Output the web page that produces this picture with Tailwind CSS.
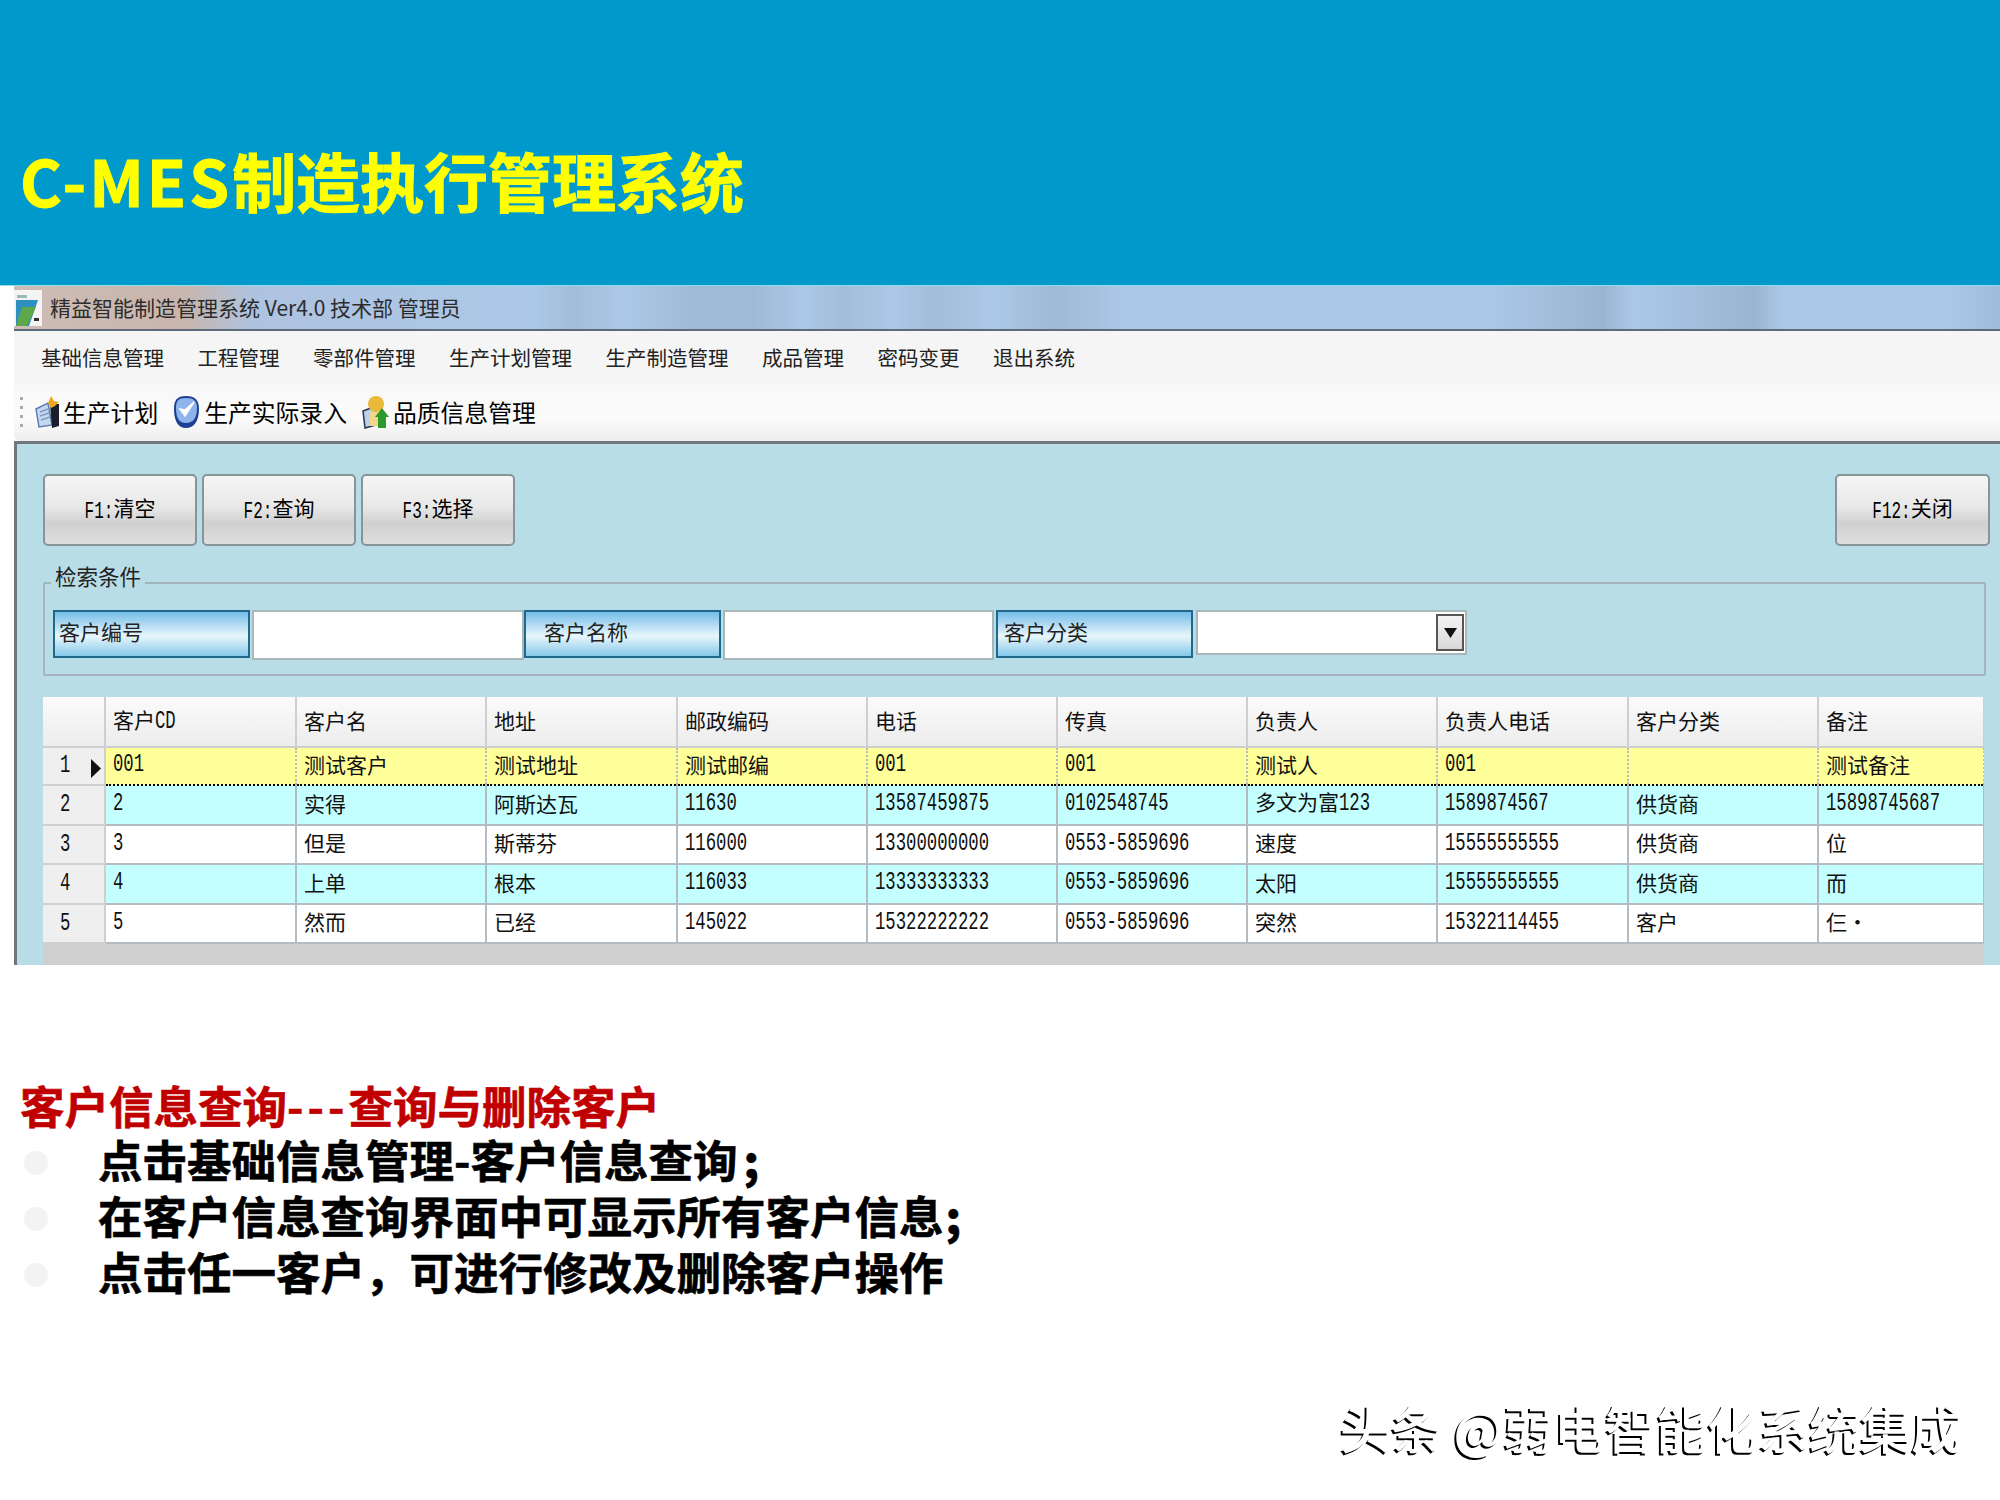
<!DOCTYPE html>
<html lang="zh-CN">
<head>
    <meta charset="UTF-8">
    <title>C-MES制造执行管理系统</title>
    <script src="https://cdn.jsdelivr.net/npm/@tailwindcss/browser@4"></script>
</head>
<body class="w-[2000px] h-[1500px] overflow-hidden bg-white font-['Noto_Sans_CJK_SC',sans-serif] text-black">

<!-- slide title -->
<header class="h-[286px] bg-[#0099cc] border-b border-[#8fdfe8] pt-[147px] pl-[20px]">
    <h1 class="text-[64px] leading-none font-bold text-[#ffff00] [-webkit-text-stroke:1px_#ffff00]"><span class="tracking-[3px]">C-MES</span>制造执行管理系统</h1>
</header>

<!-- application window -->
<section class="ml-[14px] h-[679px] flex flex-col">
    <div class="h-[45px] shrink-0 flex items-center border-b-2 border-[#5d6b7c] bg-[linear-gradient(90deg,#cdbdb6_0,#c8b6ad_170px,#aec3e0_240px,#acc8e8_520px,#a3bcd9_560px,#acc8e8_610px,#a0b9d6_680px,#a0b9d6_740px,#acc8e8_790px,#a3bcd9_830px,#acc8e8_880px,#a3bcd9_920px,#acc8e8_980px,#a0b9d6_1040px,#acc8e8_1110px,#acc8e8_1470px,#9ab5d3_1590px,#acc8e8_1620px,#9ab5d3_1740px,#acc8e8_1770px,#acc8e8_1930px,#9fbcdc_1986px)]">
        <svg class="w-[28px] h-[36px] shrink-0" viewBox="0 0 28 36">
            <rect width="28" height="36" fill="#f4f4f4"/>
            <rect x="3" y="5" width="10" height="3" fill="#9bb"/>
            <path d="M2 10H24L15 36H2Z" fill="#2f8fc0"/>
            <path d="M8 17H22L13 36H2Z" fill="#5fa84a"/>
            <rect x="20" y="28" width="5" height="3" fill="#333"/>
        </svg>
        <span class="ml-[8px] text-[21px] leading-none text-[#2c2c2c]">精益智能制造管理系统 Ver4.0 技术部 管理员</span>
    </div>
    <nav class="h-[52px] shrink-0 flex items-center gap-[33.5px] pl-[27px] bg-[#f5f5f5] text-[20.5px] leading-none text-[#222]">
        <span>基础信息管理</span>
        <span>工程管理</span>
        <span>零部件管理</span>
        <span>生产计划管理</span>
        <span>生产制造管理</span>
        <span>成品管理</span>
        <span>密码变更</span>
        <span>退出系统</span>
    </nav>
    <div class="h-[58px] shrink-0 flex items-center pl-[6px] text-[23.8px] leading-none bg-[linear-gradient(180deg,#f8f8f8_0,#fbfbfb_60%,#eeeeee_100%)] rounded-bl-[6px]">
        <div class="w-[3px] h-[30px] flex flex-col justify-between">
            <i class="block h-[3px] bg-[#aaa]"></i><i class="block h-[3px] bg-[#aaa]"></i><i class="block h-[3px] bg-[#aaa]"></i><i class="block h-[3px] bg-[#aaa]"></i>
        </div>
        <svg class="ml-[11px] w-[26px] h-[34px] shrink-0" viewBox="0 0 26 34">
            <path d="M2 14L14 8L18 30L5 32Z" fill="#c6d8ef" stroke="#5a7fae" stroke-width="1.5"/>
            <path d="M16 9H25V31L18 33Z" fill="#1a1f2c"/>
            <path d="M6 17L14 14M6 21L15 18M7 25L16 22" stroke="#7f9cc4" stroke-width="1.5"/>
            <path d="M17 1L20 6L25 7L21 11L17 13L14 8Z" fill="#f0a820"/>
        </svg>
        <span class="ml-[3px]">生产计划</span>
        <svg class="ml-[15px] w-[27px] h-[34px] shrink-0" viewBox="0 0 27 34">
            <path d="M13 1C22 1 26 5 26 14C26 26 21 33 13 33C5 33 1 26 1 14C1 5 4 1 13 1Z" fill="#1d3f94"/>
            <path d="M13 3C21 3 24 6 24 13C24 23 20 28 13 28C6 28 3 23 3 13C3 6 5 3 13 3Z" fill="#8fb4ec"/>
            <path d="M7 14L12 21L21 7L12 15Z" fill="#fff" stroke="#fff" stroke-width="1.5"/>
        </svg>
        <span class="ml-[4px]">生产实际录入</span>
        <svg class="ml-[15px] w-[27px] h-[34px] shrink-0" viewBox="0 0 27 34">
            <path d="M1 16L14 11V30L3 33Z" fill="#bcd0ea" stroke="#27324a" stroke-width="1.5"/>
            <circle cx="14" cy="9" r="8" fill="#e9b93a"/>
            <path d="M8 17H21V31H8Z" fill="#efd88a"/>
            <path d="M20 13L27 22H24V33H16V22H13Z" fill="#2c9a2c"/>
        </svg>
        <span class="ml-[4px]">品质信息管理</span>
    </div>

    <!-- form area -->
    <div class="flex-1 border-t-[3px] border-l-[3px] border-[#6f767c] bg-[#b9dde7] pl-[26px] pt-[30px]">
        <div class="flex justify-between pr-[10px] text-[21px] leading-none">
            <div class="flex gap-[5px]">
                <button class="w-[154px] h-[72px] pb-[4px] rounded-[5px] border-2 border-[#87949a] bg-[linear-gradient(180deg,#f6f6f6_0,#e8e8e8_45%,#d0d0d0_70%,#dedede_100%)] [&_span]:inline-block [&_span]:font-['Liberation_Mono'] [&_span]:text-[16px] [&_span]:scale-y-[1.45]"><span>F1:</span>清空</button>
                <button class="w-[154px] h-[72px] pb-[4px] rounded-[5px] border-2 border-[#87949a] bg-[linear-gradient(180deg,#f6f6f6_0,#e8e8e8_45%,#d0d0d0_70%,#dedede_100%)] [&_span]:inline-block [&_span]:font-['Liberation_Mono'] [&_span]:text-[16px] [&_span]:scale-y-[1.45]"><span>F2:</span>查询</button>
                <button class="w-[154px] h-[72px] pb-[4px] rounded-[5px] border-2 border-[#87949a] bg-[linear-gradient(180deg,#f6f6f6_0,#e8e8e8_45%,#d0d0d0_70%,#dedede_100%)] [&_span]:inline-block [&_span]:font-['Liberation_Mono'] [&_span]:text-[16px] [&_span]:scale-y-[1.45]"><span>F3:</span>选择</button>
            </div>
            <button class="w-[155px] h-[72px] pb-[4px] rounded-[5px] border-2 border-[#87949a] bg-[linear-gradient(180deg,#f6f6f6_0,#e8e8e8_45%,#d0d0d0_70%,#dedede_100%)] [&_span]:inline-block [&_span]:font-['Liberation_Mono'] [&_span]:text-[16px] [&_span]:scale-y-[1.45]"><span>F12:</span>关闭</button>
        </div>

        <fieldset class="mt-[23px] w-[1943px] h-[107px] border-2 border-[#a3b4ba] rounded-[2px] pl-[8px] pt-[13px]">
            <legend class="-ml-[2px] px-[4px] h-[28px] text-[21.5px] leading-[14px] text-[#222]">检索条件</legend>
            <div class="flex items-start text-[21px] leading-none text-[#222]">
                <div class="w-[197px] h-[48px] flex items-center pl-[4px] pb-[5px] border-2 border-[#1f6a8a] bg-[linear-gradient(180deg,#76bde8_0,#e8f6fc_55%,#86c8ea_100%)]">客户编号</div>
                <div class="ml-[2px] w-[272px] h-[50px] border-2 border-[#a9b6ba] bg-white"></div>
                <div class="w-[197px] h-[48px] flex items-center pl-[18px] pb-[5px] border-2 border-[#1f6a8a] bg-[linear-gradient(180deg,#76bde8_0,#e8f6fc_55%,#86c8ea_100%)]">客户名称</div>
                <div class="ml-[2px] w-[271px] h-[50px] border-2 border-[#a9b6ba] bg-white"></div>
                <div class="ml-[2px] w-[197px] h-[48px] flex items-center pl-[6px] pb-[5px] border-2 border-[#1f6a8a] bg-[linear-gradient(180deg,#76bde8_0,#e8f6fc_55%,#86c8ea_100%)]">客户分类</div>
                <div class="ml-[3px] w-[271px] h-[45px] flex items-center justify-end pr-[1px] border-2 border-[#a9b6ba] bg-white">
                    <div class="w-[28px] h-[37px] flex items-center justify-center border-2 border-[#555] bg-[linear-gradient(180deg,#f4f4f4,#d8d8d8)]">
                        <svg class="w-[13px] h-[10px]" viewBox="0 0 13 10"><path d="M0 0H13L6.5 10Z" fill="#111"/></svg>
                    </div>
                </div>
            </div>
        </fieldset>

        <!-- customer grid -->
        <div class="mt-[21px] w-[1941px] h-[268px] bg-[#cfcfcf] overflow-hidden">
            <table class="table-fixed w-[1941px] text-[21px] leading-none text-[#111] [&_td]:border-r-2 [&_td]:border-b-2 [&_td]:border-[#b4bcc2] [&_td]:pl-[7px] [&_td]:pb-[4px] [&_th]:border-r-2 [&_th]:border-b-2 [&_th]:border-[#cfcfcf] [&_th]:pl-[7px] [&_th]:pb-[2px] [&_th]:text-left [&_th]:font-normal [&_span]:inline-block [&_span]:font-['Liberation_Mono'] [&_span]:text-[17.3px] [&_span]:scale-y-[1.45] [&_span]:-translate-y-[2px]">
                <colgroup>
                    <col class="w-[62px]"><col class="w-[191px]"><col class="w-[190px]"><col class="w-[191px]"><col class="w-[190px]"><col class="w-[190px]"><col class="w-[190px]"><col class="w-[190px]"><col class="w-[191px]"><col class="w-[190px]"><col class="w-[166px]">
                </colgroup>
                <thead>
                    <tr class="h-[50px] bg-[linear-gradient(180deg,#fbfbfb,#ececec)]">
                        <th></th><th>客户<span>CD</span></th><th>客户名</th><th>地址</th><th>邮政编码</th><th>电话</th><th>传真</th><th>负责人</th><th>负责人电话</th><th>客户分类</th><th>备注</th>
                    </tr>
                </thead>
                <tbody>
                    <tr class="h-[38px] bg-[#ffff99] [&_td]:border-t-2 [&_td]:border-t-black [&_td]:border-b-black [&_td]:border-dotted [&_td]:border-r-[#b4bcc2]">
                        <th class="bg-[#efefef] relative pl-[17px]!"><span>1</span><svg class="absolute left-[48px] top-[11px] w-[10px] h-[19px]" viewBox="0 0 10 19"><path d="M0 0L10 9.5L0 19Z" fill="#111"/></svg></th>
                        <td><span>001</span></td><td>测试客户</td><td>测试地址</td><td>测试邮编</td><td><span>001</span></td><td><span>001</span></td><td>测试人</td><td><span>001</span></td><td></td><td>测试备注</td>
                    </tr>
                    <tr class="h-[40px] bg-[#c4ffff]">
                        <th class="bg-[#efefef] pl-[17px]!"><span>2</span></th>
                        <td><span>2</span></td><td>实得</td><td>阿斯达瓦</td><td><span>11630</span></td><td><span>13587459875</span></td><td><span>0102548745</span></td><td>多文为富<span>123</span></td><td><span>1589874567</span></td><td>供货商</td><td><span>15898745687</span></td>
                    </tr>
                    <tr class="h-[39px] bg-white">
                        <th class="bg-[#efefef] pl-[17px]!"><span>3</span></th>
                        <td><span>3</span></td><td>但是</td><td>斯蒂芬</td><td><span>116000</span></td><td><span>13300000000</span></td><td><span>0553-5859696</span></td><td>速度</td><td><span>15555555555</span></td><td>供货商</td><td>位</td>
                    </tr>
                    <tr class="h-[40px] bg-[#c4ffff]">
                        <th class="bg-[#efefef] pl-[17px]!"><span>4</span></th>
                        <td><span>4</span></td><td>上单</td><td>根本</td><td><span>116033</span></td><td><span>13333333333</span></td><td><span>0553-5859696</span></td><td>太阳</td><td><span>15555555555</span></td><td>供货商</td><td>而</td>
                    </tr>
                    <tr class="h-[39px] bg-white">
                        <th class="bg-[#efefef] pl-[17px]!"><span>5</span></th>
                        <td><span>5</span></td><td>然而</td><td>已经</td><td><span>145022</span></td><td><span>15322222222</span></td><td><span>0553-5859696</span></td><td>突然</td><td><span>15322114455</span></td><td>客户</td><td>仨·</td>
                    </tr>
                </tbody>
            </table>
        </div>
    </div>
</section>

<!-- notes below the screenshot -->
<section class="pt-[116px] pl-[20px]">
    <h2 class="h-[54px] text-[44.5px] leading-[48px] font-bold text-[#c00000] [-webkit-text-stroke:0.6px_#c00000]">客户信息查询<span class="tracking-[4px]">---</span>查询与删除客户</h2>
    <ul class="text-[44.5px] leading-none font-bold [-webkit-text-stroke:0.6px_#000]">
        <li class="h-[56px] flex items-center"><i class="block ml-[4px] w-[24px] h-[24px] rounded-full bg-[#f3f3f3]"></i><span class="ml-[50px] pb-[7px]">点击基础信息管理-客户信息查询<b class="ml-[6px]">;</b></span></li>
        <li class="h-[56px] flex items-center"><i class="block ml-[4px] w-[24px] h-[24px] rounded-full bg-[#f3f3f3]"></i><span class="ml-[50px] pb-[7px]">在客户信息查询界面中可显示所有客户信息<b class="ml-[2px]">;</b></span></li>
        <li class="h-[56px] flex items-center"><i class="block ml-[4px] w-[24px] h-[24px] rounded-full bg-[#f3f3f3]"></i><span class="ml-[50px] pb-[7px]">点击任一客户，可进行修改及删除客户操作</span></li>
    </ul>
</section>

<!-- watermark -->
<div class="mt-[96px] ml-[1340px] text-[51px] leading-[56px] font-medium whitespace-nowrap text-white [text-shadow:-2px_2px_0_#000]">头条 @弱电智能化系统集成</div>

</body>
</html>
